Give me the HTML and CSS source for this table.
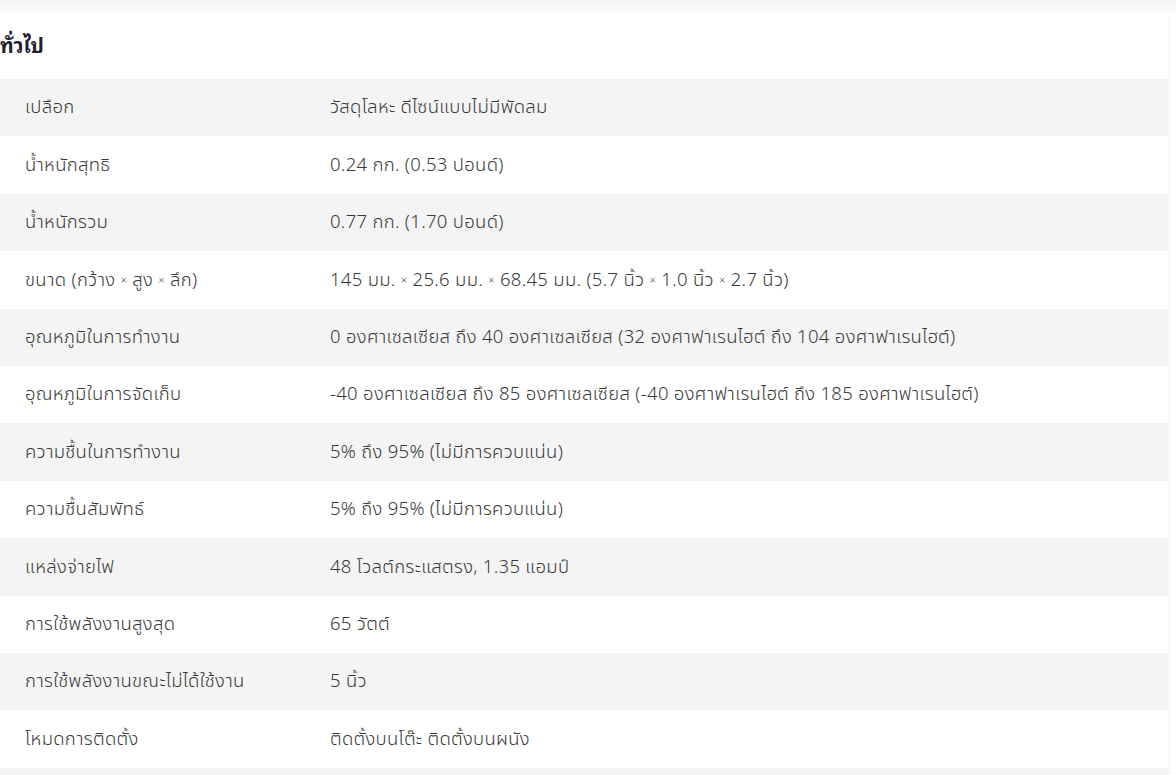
FILE: index.html
```html
<!DOCTYPE html>
<html lang="th">
<head>
<meta charset="utf-8">
<link rel="stylesheet" href="styles.css">
</head>
<body>
<div class="topshade"></div>
<section class="specs">
  <h2 class="specs-title">ทั่วไป</h2>
  <div class="spec-table">
    <div class="row"><div class="label">เปลือก</div><div class="value">วัสดุโลหะ ดีไซน์แบบไม่มีพัดลม</div></div>
    <div class="row"><div class="label">น้ำหนักสุทธิ</div><div class="value">0.24 กก. (0.53 ปอนด์)</div></div>
    <div class="row"><div class="label">น้ำหนักรวม</div><div class="value">0.77 กก. (1.70 ปอนด์)</div></div>
    <div class="row"><div class="label">ขนาด (กว้าง <span class="x">×</span> สูง <span class="x">×</span> ลึก)</div><div class="value">145 มม. <span class="x">×</span> 25.6 มม. <span class="x">×</span> 68.45 มม. (5.7 นิ้ว <span class="x">×</span> 1.0 นิ้ว <span class="x">×</span> 2.7 นิ้ว)</div></div>
    <div class="row"><div class="label">อุณหภูมิในการทำงาน</div><div class="value">0 องศาเซลเซียส ถึง 40 องศาเซลเซียส (32 องศาฟาเรนไฮต์ ถึง 104 องศาฟาเรนไฮต์)</div></div>
    <div class="row"><div class="label">อุณหภูมิในการจัดเก็บ</div><div class="value">-40 องศาเซลเซียส ถึง 85 องศาเซลเซียส (-40 องศาฟาเรนไฮต์ ถึง 185 องศาฟาเรนไฮต์)</div></div>
    <div class="row"><div class="label">ความชื้นในการทำงาน</div><div class="value">5% ถึง 95% (ไม่มีการควบแน่น)</div></div>
    <div class="row"><div class="label">ความชื้นสัมพัทธ์</div><div class="value">5% ถึง 95% (ไม่มีการควบแน่น)</div></div>
    <div class="row"><div class="label">แหล่งจ่ายไฟ</div><div class="value">48 โวลต์กระแสตรง, 1.35 แอมป์</div></div>
    <div class="row"><div class="label">การใช้พลังงานสูงสุด</div><div class="value">65 วัตต์</div></div>
    <div class="row"><div class="label">การใช้พลังงานขณะไม่ได้ใช้งาน</div><div class="value">5 นิ้ว</div></div>
    <div class="row"><div class="label">โหมดการติดตั้ง</div><div class="value">ติดตั้งบนโต๊ะ ติดตั้งบนผนัง</div></div>
    <div class="row"><div class="label">&nbsp;</div><div class="value">&nbsp;</div></div>
  </div>
</section>
</body>
</html>
```
FILE: styles.css
```css
html, body {
  margin: 0;
  padding: 0;
  background: #ffffff;
  overflow: hidden;
}
body {
  font-family: "Noto Sans Thai", "Noto Sans", "DejaVu Sans", sans-serif;
  color: #383838;
  height: 775px;
}
.topshade {
  height: 16px;
  background: linear-gradient(to bottom, #f3f3f3, #ffffff);
}
.specs {
  width: 1168px;
  border-right: 2px solid #f6f6f6;
}
.specs-title {
  margin: 0;
  height: 63px;
  display: flex;
  align-items: center;
  font-family: "Noto Sans Thai Looped", "Noto Serif Thai", "Noto Sans Thai", sans-serif;
  font-weight: bold;
  font-size: 20px;
  color: #1c2230;
  padding-bottom: 8px;
  box-sizing: border-box;
}
.spec-table {
  display: flex;
  flex-direction: column;
}
.row {
  display: flex;
  align-items: center;
  height: 57.4px;
  font-size: 18.5px;
  font-weight: 300;
  line-height: 1;
  letter-spacing: 0.3px;
}
.row:nth-child(odd) {
  background: #f4f4f4;
}
.label {
  width: 305px;
  padding-left: 25px;
  flex: none;
}
.value {
  flex: 1;
}
.x {
  font-size: 0.6em;
  vertical-align: 0.15em;
}
```
